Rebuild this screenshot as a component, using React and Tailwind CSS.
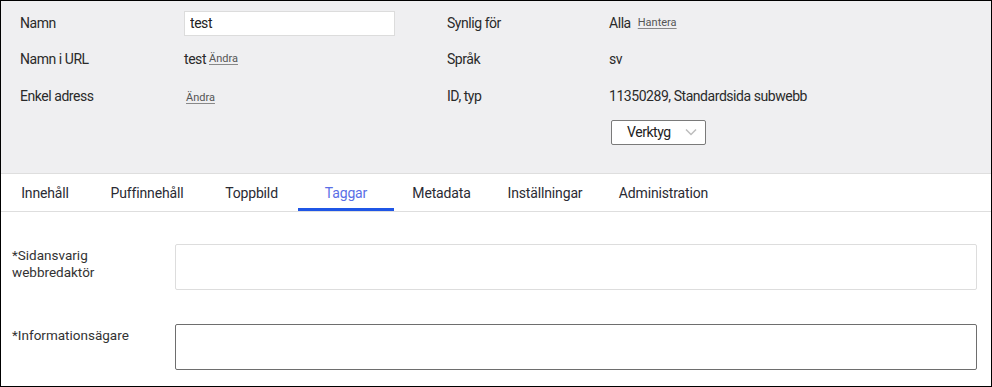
import React from "react";

const tabs = [
  { label: "Innehåll", w: "w-[88px]" },
  { label: "Puffinnehåll", w: "w-[116px]" },
  { label: "Toppbild", w: "w-[93px]" },
  { label: "Taggar", w: "w-[96px]", active: true },
  { label: "Metadata", w: "w-[95px]" },
  { label: "Inställningar", w: "w-[112px]" },
  { label: "Administration", w: "w-[125px]" },
];

const LinkText = ({ children }) => (
  <a href="#" className="text-[11px] tracking-normal text-[#555] underline underline-offset-2 decoration-[#888]">
    {children}
  </a>
);

export default function App() {
  return (
    <div
      className="w-[992px] h-[387px] border border-black bg-white text-[#2a2a2a] overflow-hidden"
      style={{ fontFamily: "Roboto, 'Liberation Sans', sans-serif" }}
    >
      {/* page info */}
      <div className="bg-[#efeff1] border-b border-[#dedede] pt-[4px] pb-[23px] pl-[19px] text-[14px] tracking-[-0.45px]">
        <div className="grid grid-cols-[164px_263px_162px_1fr] grid-rows-[36px_37px_36px_36px] items-center">
          <div>Namn</div>
          <div>
            <input
              defaultValue="test"
              className="w-[211px] h-[25px] bg-white border border-[#dcdcdc] px-[5px] text-[14px] text-[#222] outline-none"
            />
          </div>
          <div>Synlig för</div>
          <div className="flex items-center gap-[7px]">
            <span>Alla</span>
            <LinkText>Hantera</LinkText>
          </div>

          <div>Namn i URL</div>
          <div className="flex items-center gap-[3px]">
            <span>test</span>
            <LinkText>Ändra</LinkText>
          </div>
          <div>Språk</div>
          <div>sv</div>

          <div>Enkel adress</div>
          <div className="pl-[2px]">
            <LinkText>Ändra</LinkText>
          </div>
          <div>ID, typ</div>
          <div>11350289, Standardsida subwebb</div>

          <div />
          <div />
          <div />
          <div className="pl-[2px]">
            <button className="w-[95px] h-[25px] flex items-center justify-between pl-[15px] pr-[8px] bg-white border border-[#7a7a7a] rounded-[2px] text-[14px] text-[#222]">
              <span>Verktyg</span>
              <svg width="12" height="8" viewBox="0 0 12 8" fill="none">
                <path d="M1 1.5L6 6.5L11 1.5" stroke="#bdbdbd" strokeWidth="1.5" />
              </svg>
            </button>
          </div>
        </div>
      </div>

      {/* tabs */}
      <div className="flex h-[38px] border-b border-[#dedede] text-[14px] tracking-[-0.15px]">
        {tabs.map((t) => (
          <div
            key={t.label}
            className={
              t.active
                ? `${t.w} flex items-center justify-center border-b-[3px] border-[#1f56e6] pt-[5px] text-[#5a6ee6]`
                : `${t.w} flex items-center justify-center pt-[2px] text-[#2a2a33]`
            }
          >
            {t.label}
          </div>
        ))}
      </div>

      {/* form */}
      <div className="pt-[32px] pl-[11px] pr-[14px] text-[13.5px] text-[#333] flex flex-col gap-[34px]">
        <div className="flex items-start">
          <div className="w-[163px] pt-[3px] leading-[17px]">
            *Sidansvarig
            <br />
            webbredaktör
          </div>
          <div className="flex-1 h-[46px] border border-[#dddddd] rounded-[2px] bg-white" />
        </div>
        <div className="flex items-start">
          <div className="w-[163px] pt-[3px] leading-[17px]">*Informationsägare</div>
          <div className="flex-1 h-[46px] border border-[#6e6e6e] rounded-[2px] bg-white" />
        </div>
      </div>
    </div>
  );
}
